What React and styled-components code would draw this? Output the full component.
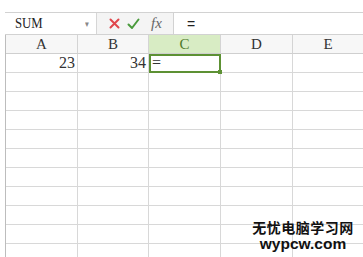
import React from 'react';
import styled, { createGlobalStyle } from 'styled-components';

const GlobalStyle = createGlobalStyle`
  html, body {
    margin: 0;
    padding: 0;
    background: #fff;
  }
`;

const columns = ['A', 'B', 'C', 'D', 'E'];
const widths = [72, 71, 72, 72, 71];
const rows = [
  ['23', '34', '=', '', ''],
  ...Array.from({ length: 10 }, () => ['', '', '', '', '']),
];

const App = () => {
  return (
    <>
      <GlobalStyle />
      <Page>
        <FormulaBar>
          <NameBox>
            <span>SUM</span>
            <Arrow>▾</Arrow>
          </NameBox>
          <IconArea>
            <svg width="11" height="11" viewBox="0 0 11 11">
              <path d="M1.5 1.5 L9.5 9.5 M9.5 1.5 L1.5 9.5" stroke="#e0464c" strokeWidth="2" strokeLinecap="round" />
            </svg>
            <svg width="13" height="12" viewBox="0 0 13 12">
              <path d="M1.5 6.5 L5 10 L11.5 1.5" stroke="#4a9a3c" strokeWidth="2" fill="none" strokeLinecap="round" strokeLinejoin="round" />
            </svg>
            <Fx>fx</Fx>
          </IconArea>
          <FormulaInput>=</FormulaInput>
        </FormulaBar>
        <Grid>
          {columns.map((c) => (
            <HeaderCell key={c} $active={c === 'C'}>{c}</HeaderCell>
          ))}
          {rows.map((r, ri) =>
            r.map((v, ci) => (
              <Cell key={`${ri}-${ci}`} $selected={ri === 0 && ci === 2}>
                {v}
              </Cell>
            ))
          )}
        </Grid>
        <Watermark>
          <CnMark>无忧电脑学习网</CnMark>
          <EnMark>wypcw.com</EnMark>
        </Watermark>
      </Page>
    </>
  );
};

export default App;

const Page = styled.div`
  position: relative;
  width: 363px;
  height: 257px;
  overflow: hidden;
  padding-top: 12px;
  box-sizing: border-box;
  background: #fff;
`;

const FormulaBar = styled.div`
  display: flex;
  height: 23px;
  margin-left: 5px;
  border-top: 1px solid #d2d2d2;
  border-bottom: 1px solid #d2d2d2;
  box-sizing: border-box;
`;

const NameBox = styled.div`
  width: 92px;
  display: flex;
  align-items: center;
  justify-content: space-between;
  padding: 0 6px 0 10px;
  box-sizing: border-box;
  background: #fff;
  border-right: 1px solid #d6d6d6;
  font-family: "Liberation Serif", serif;
  font-size: 15px;
  color: #222;
  span {
    display: inline-block;
    transform: scaleX(0.85);
    transform-origin: left;
  }
`;

const Arrow = styled.span`
  font-size: 9px;
  color: #888;
`;

const IconArea = styled.div`
  width: 76px;
  display: flex;
  align-items: center;
  gap: 7px;
  padding-left: 12px;
  box-sizing: border-box;
  background: #f4f4f4;
`;

const Fx = styled.span`
  font-family: "Liberation Serif", serif;
  font-style: italic;
  font-size: 15px;
  color: #666;
  margin-left: 4px;
`;

const FormulaInput = styled.div`
  flex: 1;
  display: flex;
  align-items: center;
  padding-left: 13px;
  background: #fff;
  border-left: 1px solid #d2d2d2;
  font-family: "Liberation Sans", sans-serif;
  font-size: 14px;
  color: #222;
`;

const Grid = styled.div`
  display: grid;
  grid-template-columns: ${widths.map((w) => `${w}px`).join(' ')};
  grid-auto-rows: 19px;
  margin-left: 5px;
  border-left: 1px solid #bdbdbd;
`;

const HeaderCell = styled.div`
  display: flex;
  align-items: center;
  justify-content: center;
  background: ${(p) => (p.$active ? '#d8ecc4' : '#f7f7f7')};
  border-right: 1px solid #d4d4d4;
  border-bottom: 1px solid #cfcfcf;
  box-sizing: border-box;
  font-family: "Liberation Serif", serif;
  font-size: 15px;
  color: ${(p) => (p.$active ? '#4e7a2a' : '#333')};
`;

const Cell = styled.div`
  position: relative;
  display: flex;
  align-items: center;
  justify-content: ${(p) => (p.$selected ? 'flex-start' : 'flex-end')};
  padding: ${(p) => (p.$selected ? '0 0 0 3px' : '0 2px 0 0')};
  box-sizing: border-box;
  border-right: 1px solid #d8d8d8;
  border-bottom: 1px solid #d8d8d8;
  font-family: "Liberation Serif", serif;
  font-size: 16px;
  color: #333;
  ${(p) =>
    p.$selected &&
    `
    outline: 2px solid #5d9134;
    outline-offset: -2px;
    z-index: 1;
    &::after {
      content: '';
      position: absolute;
      right: -2px;
      bottom: -2px;
      width: 4px;
      height: 4px;
      background: #5d9134;
    }
  `}
`;

const Watermark = styled.div`
  position: absolute;
  left: 250px;
  top: 220px;
  width: 106px;
  display: flex;
  flex-direction: column;
  align-items: center;
  gap: 1px;
  font-weight: bold;
  color: #111;
`;

const CnMark = styled.div`
  font-family: "Noto Sans CJK SC", sans-serif;
  font-size: 14px;
  line-height: 15px;
  letter-spacing: 0.5px;
`;

const EnMark = styled.div`
  font-family: "Liberation Sans", sans-serif;
  font-size: 15.5px;
  line-height: 15px;
`;
